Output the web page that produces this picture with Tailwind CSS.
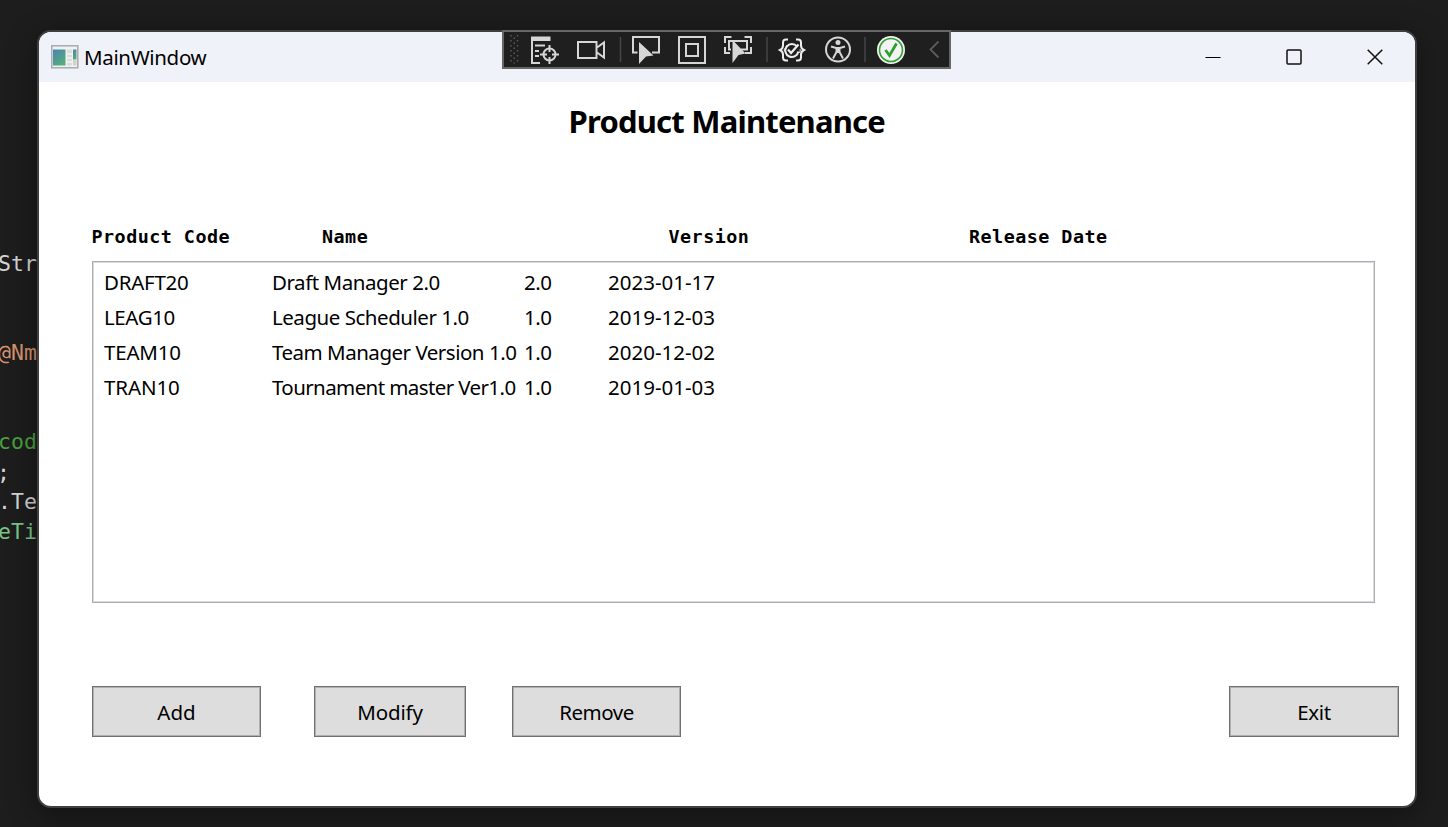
<!DOCTYPE html>
<html lang="en">
<head>
<meta charset="utf-8">
<title>MainWindow</title>
<script src="https://cdn.jsdelivr.net/npm/@tailwindcss/browser@4"></script>
</head>
<body class="relative h-[827px] w-[1448px] overflow-hidden bg-[#1d1d1d] font-['Noto_Sans','Open_Sans',sans-serif] text-[20.5px] text-black">

<!-- editor text behind the window -->
<div class="absolute left-0 top-0 h-full w-[60px] overflow-hidden whitespace-pre font-['DejaVu_Sans_Mono',monospace] text-[21.5px] leading-[30px] text-[#d4d4d4]">
  <div class="absolute left-[-2px] top-[249px]">Stri</div>
  <div class="absolute left-[-2px] top-[338px] text-[#d6936f]">@Nma</div>
  <div class="absolute left-[-2px] top-[427px] text-[#48a03f]">code</div>
  <div class="absolute left-[-3px] top-[458px]">;</div>
  <div class="absolute left-[-2px] top-[487px]">.Tex</div>
  <div class="absolute left-[-2px] top-[517px] text-[#7cc48a]">eTim</div>
</div>

<main class="absolute left-[37px] top-[30px] flex h-[778px] w-[1380px] flex-col overflow-hidden rounded-[14px] border-2 border-[#404040] bg-white shadow-[0_6px_30px_rgba(0,0,0,0.4)]">
  <header class="flex h-[50px] shrink-0 items-center bg-[#f0f2fa] pl-3">
    <svg class="mt-[-1px] h-6 w-7" viewBox="0 0 28 24">
      <defs><linearGradient id="g" x1="0" y1="0" x2=".6" y2="1"><stop offset="0" stop-color="#4a82b4"/><stop offset="1" stop-color="#55ad7c"/></linearGradient></defs>
      <rect x=".8" y=".8" width="26" height="22" fill="#f1f1f1" stroke="#a6abaf" stroke-width="1.5"/>
      <rect x="2" y="4.5" width="12.5" height="16" fill="url(#g)"/>
      <rect x="16" y="4.5" width="5" height="16" fill="#dcdcdc"/><path d="M16 9h5M16 13h5M16 17h5" stroke="#fff"/>
      <rect x="22" y="4.5" width="3.5" height="10" fill="url(#g)"/><rect x="22" y="15" width="3.5" height="5.5" fill="#d2d2d2"/>
    </svg>
    <span class="ml-[5px] tracking-[-0.35px]">MainWindow</span>
    <div class="mt-[-1px] ml-auto flex items-center gap-[65px] pr-[32.5px]">
      <svg class="size-4" viewBox="0 0 16 16" fill="none" stroke="#000" stroke-width="1"><path d="M.5 8.5h15"/></svg>
      <svg class="size-4" viewBox="0 0 16 16" fill="none" stroke="#111" stroke-width="1.5"><rect x="1" y="1" width="14" height="14" rx="1"/></svg>
      <svg class="size-4" viewBox="0 0 16 16" fill="none" stroke="#111" stroke-width="1.5"><path d="M.7.7l14.600 14.600M15.300.7L.7 15.300"/></svg>
    </div>
  </header>

  <section class="flex flex-1 flex-col">
    <h1 class="mt-[17px] pl-[529.5px] text-[31px] leading-[44px] font-bold tracking-[-0.8px] whitespace-nowrap">Product Maintenance</h1>
    <div class="mt-[79px] flex h-[30px] pl-[52.500px] font-['DejaVu_Sans_Mono',monospace] text-[18.4px] leading-[30px] font-bold tracking-[0.47px] whitespace-nowrap">
      <span class="w-[230.5px]">Product Code</span>
      <span class="w-[346.5px]">Name</span>
      <span class="w-[300.5px]">Version</span>
      <span>Release Date</span>
    </div>
    <div class="mt-[9px] ml-[53px] flex h-[342px] w-[1283px] flex-col border border-[#abadb3] pt-[3px] pl-[11px] leading-[35px] whitespace-nowrap shadow-[inset_0_0_0_1px_#d9dadc]">
      <div class="flex"><span class="w-[168px] tracking-[-0.25px]">DRAFT20</span><span class="w-[252px] tracking-[-0.45px]">Draft Manager 2.0</span><span class="w-[84px] tracking-[-0.5px]">2.0</span><span>2023-01-17</span></div>
      <div class="flex"><span class="w-[168px] tracking-[-0.4px]">LEAG10</span><span class="w-[252px] tracking-[-0.47px]">League Scheduler 1.0</span><span class="w-[84px] tracking-[-0.5px]">1.0</span><span>2019-12-03</span></div>
      <div class="flex"><span class="w-[168px] tracking-[-0.2px]">TEAM10</span><span class="w-[252px] tracking-[-0.49px]">Team Manager Version 1.0</span><span class="w-[84px] tracking-[-0.5px]">1.0</span><span>2020-12-02</span></div>
      <div class="flex"><span class="w-[168px] tracking-[-0.1px]">TRAN10</span><span class="w-[252px] tracking-[-0.6px]">Tournament master Ver1.0</span><span class="w-[84px] tracking-[-0.5px]">1.0</span><span>2019-01-03</span></div>
    </div>
    <div class="mt-[83px] flex pl-[53px]">
      <button class="h-[51px] w-[169px] border border-[#707070] bg-[#ddd] pt-[2px] shadow-[inset_0_0_0_1px_#b0b0b0]">Add</button>
      <button class="ml-[53px] h-[51px] w-[152px] border border-[#707070] bg-[#ddd] pt-[2px] tracking-[-0.15px] shadow-[inset_0_0_0_1px_#b0b0b0]">Modify</button>
      <button class="ml-[46px] h-[51px] w-[169px] border border-[#707070] bg-[#ddd] pt-[2px] tracking-[-0.5px] shadow-[inset_0_0_0_1px_#b0b0b0]">Remove</button>
      <button class="mr-4 ml-auto h-[51px] w-[170px] border border-[#707070] bg-[#ddd] pt-[2px] tracking-[-0.3px] shadow-[inset_0_0_0_1px_#b0b0b0]">Exit</button>
    </div>
  </section>
</main>

<!-- debug toolbar floating over the title bar -->
<div class="absolute left-[502px] top-[30px] h-[39px] w-[449px] border-2 border-[#666] bg-[#1f1f1f]">
  <svg class="h-[35px] w-[445px]" viewBox="504 32 445 35" fill="none" stroke="#d6d6d6" stroke-width="2">
    <path d="M511 35v28M517.500 35v28" stroke="#585858" stroke-width="1.500" stroke-dasharray="1.500 3.500"/><path d="M514.250 37.500v26" stroke="#585858" stroke-width="1.500" stroke-dasharray="1.500 3.500"/>
    <path d="M531 36.500h19.500v4.500H531z" fill="#d6d6d6" stroke="none"/><path d="M532 40v23h8M535 45.500h10M535 51h4M535 56h4"/>
    <circle cx="549.500" cy="54.500" r="6"/><path d="M549.500 45v7M549.500 57v7M540 54.500h7M552 54.500h7"/>
    <path d="M578 42h18.500v16H578zM597 47.500l7-5v15l-7-5"/>
    <path d="M620.500 37v25M767 37v25M865 37v25" stroke="#464646" stroke-width="1.500"/>
    <path d="M637.500 52.500H633V37h26v15.500h-7"/><path d="M639 42l14.500 13.500-7.500 1-7 7.500z" fill="#d6d6d6" stroke="none"/>
    <path d="M679 37h26v26h-26zM686 44h12v12h-12z"/>
    <path d="M731.500 37H725v6M744.500 37h6.500v6M725 47v6h5M751 47v6h-6"/><path d="M731 49.500h-2V41h18v8.500h-6"/><path d="M732.500 40l13 13.500-7 1.500-6 8z" fill="#d6d6d6" stroke="none"/>
    <g stroke="#eee"><path d="M788 39.500h-2q-3 0-3 3v3q0 3-3 4.500 3 1.500 3 4.500v3q0 3 3 3h2M796 39.500h2q3 0 3 3v3q0 3 3 4.500-3 1.500-3 4.500v3q0 3-3 3h-2"/><path d="M797 46.500a6.500 6.500 0 1 0 1.300 5"/><path d="M788 49.500l3 3.500 7.500-8.500" stroke-width="2.200"/><path d="M787 45q-1 2-3 5 2 3 3 5M799 53q2-2 1-4" stroke-width="1"/></g>
    <circle cx="838" cy="49.500" r="12"/><circle cx="838" cy="42.500" r="2.500" fill="#d6d6d6" stroke="none"/><path d="M831 46.500l5 1.500h4l5-1.500M836.500 48v4l-3.500 6.500M839.500 48v4l3.500 6.500"/><path d="M836 47h4v6h-4z" fill="#d6d6d6" stroke="none"/>
    <circle cx="891" cy="50" r="14" fill="#f3f3f3" stroke="none"/><circle cx="891" cy="50" r="11.500" stroke="#2fa02f" stroke-width="1.600"/><path d="M885.500 50l4 5.500 7-12" stroke="#2fa02f" stroke-width="2.800"/>
    <path d="M938.500 41.500l-8 8 8 8" stroke="#5c5c5c" stroke-width="1.800"/>
  </svg>
</div>
</body>
</html>
